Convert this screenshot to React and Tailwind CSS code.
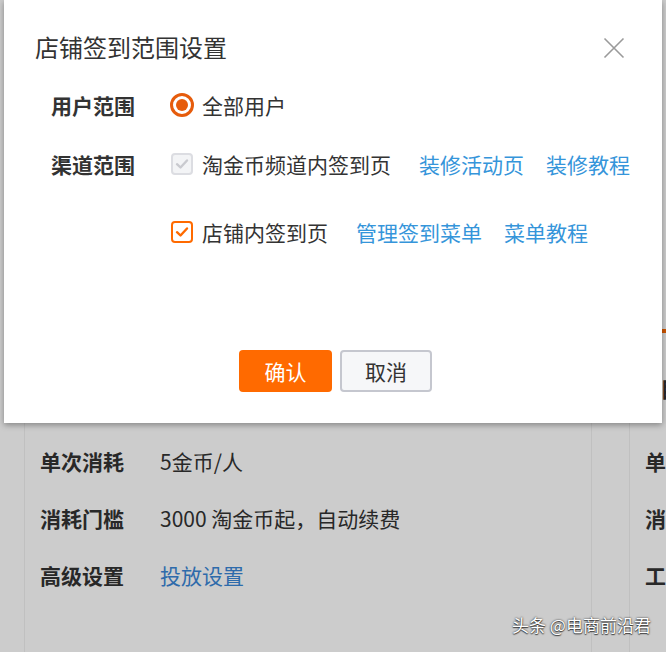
import React from "react";

function Radio() {
  return (
    <span className="flex h-[24px] w-[24px] shrink-0 items-center justify-center rounded-full border-[3px] border-[#e65c0c]">
      <span className="h-[12px] w-[12px] rounded-full bg-[#e65c0c]" />
    </span>
  );
}

function Check({ disabled }) {
  return (
    <span
      className={
        disabled
          ? "flex h-[22px] w-[22px] shrink-0 items-center justify-center rounded-[4px] border-2 border-[#dcdde2] bg-[#f3f4f6]"
          : "flex h-[22px] w-[22px] shrink-0 items-center justify-center rounded-[4px] border-2 border-[#ff6a00] bg-white"
      }
    >
      <svg width="14" height="14" viewBox="0 0 14 14" fill="none">
        <path
          d="M2 7.2 L5.5 10.5 L12 3.5"
          stroke={disabled ? "#c9cacf" : "#ff6a00"}
          strokeWidth="2.4"
          strokeLinecap="round"
          strokeLinejoin="round"
        />
      </svg>
    </span>
  );
}

function BgRow({ label, value, link }) {
  return (
    <div className="flex h-[57px] items-center">
      <span className="w-[120px] shrink-0 font-bold text-[#333]">{label}</span>
      <span className={link ? "text-[#3a86d6]" : "text-[#333]"}>{value}</span>
    </div>
  );
}

export default function App() {
  return (
    <div className="relative h-[652px] w-[666px] overflow-hidden text-[21px] leading-[30px] [font-family:'Noto_Sans_CJK_SC','Noto_Sans',sans-serif]">
      {/* background page */}
      <div className="flex h-full bg-white">
        <div className="ml-[24px] w-[568px] shrink-0 border-x border-[#f0f0f0] pl-[15px] pt-[432px]">
          <BgRow label="单次消耗" value="5金币/人" />
          <BgRow label="消耗门槛" value="3000 淘金币起，自动续费" />
          <BgRow label="高级设置" value="投放设置" link />
        </div>
        <div className="ml-[37px] flex-1 border-l border-[#f0f0f0] pt-[329px]">
          <div className="h-[4px] bg-[#ff6a00]" />
          <div className="flex h-[99px] items-center pl-[30px] pt-[8px] text-[23px] font-bold text-[#333] whitespace-nowrap">
            自定义签到
          </div>
          <div className="pl-[15px] whitespace-nowrap">
            <BgRow label="单次消耗" value="5金币/人" />
            <BgRow label="消耗门槛" value="3000" />
            <BgRow label="工具设置" value="" />
          </div>
        </div>
      </div>

      {/* overlay */}
      <div className="absolute inset-0 bg-black/20" />

      {/* modal */}
      <div className="absolute left-[4px] top-0 h-[423px] w-[658px] bg-white pl-[31px] pt-[31px] shadow-[0_2px_6px_rgba(0,0,0,0.35)]">
        <div className="flex h-[32px] items-center justify-between pr-[37px]">
          <span className="text-[24px] text-[#333]">店铺签到范围设置</span>
          <svg width="22" height="22" viewBox="0 0 22 22" fill="none" className="mt-[2px]">
            <path d="M1.5 1.5 L20.5 20.5 M20.5 1.5 L1.5 20.5" stroke="#9a9a9a" strokeWidth="1.6" />
          </svg>
        </div>

        <div className="mt-[22px] pl-[16px]">
          <div className="flex h-[40px] items-center">
            <span className="w-[119px] shrink-0 font-bold text-[#333]">用户范围</span>
            <Radio />
            <span className="ml-[8px] text-[#333]">全部用户</span>
          </div>

          <div className="mt-[19px] flex">
            <span className="flex h-[40px] w-[119px] shrink-0 items-center font-bold text-[#333]">渠道范围</span>
            <div className="flex flex-col gap-[28px] pl-[1px] whitespace-nowrap">
              <div className="flex h-[40px] items-center">
                <Check disabled />
                <span className="ml-[9px] text-[#333]">淘金币频道内签到页</span>
                <span className="ml-[28px] text-[#3595da]">装修活动页</span>
                <span className="ml-[22px] text-[#3595da]">装修教程</span>
              </div>
              <div className="flex h-[40px] items-center">
                <Check />
                <span className="ml-[9px] text-[#333]">店铺内签到页</span>
                <span className="ml-[28px] text-[#3595da]">管理签到菜单</span>
                <span className="ml-[22px] text-[#3595da]">菜单教程</span>
              </div>
            </div>
          </div>
        </div>

        <div className="mt-[98px] flex gap-[8px] pl-[204px]">
          <button className="flex h-[42px] w-[93px] items-center justify-center rounded-[4px] bg-[#ff6a00] text-white">
            确认
          </button>
          <button className="flex h-[42px] w-[92px] items-center justify-center rounded-[4px] border-2 border-[#c5c7cf] bg-[#f6f7f9] text-[#333]">
            取消
          </button>
        </div>
      </div>

      {/* watermark */}
      <div className="absolute left-[512px] top-[612px] text-[17px] leading-[26px] text-white [text-shadow:0_0_2px_rgba(0,0,0,0.9),0_1px_1px_rgba(0,0,0,0.6)]">
        头条 @电商前沿君
      </div>
    </div>
  );
}
